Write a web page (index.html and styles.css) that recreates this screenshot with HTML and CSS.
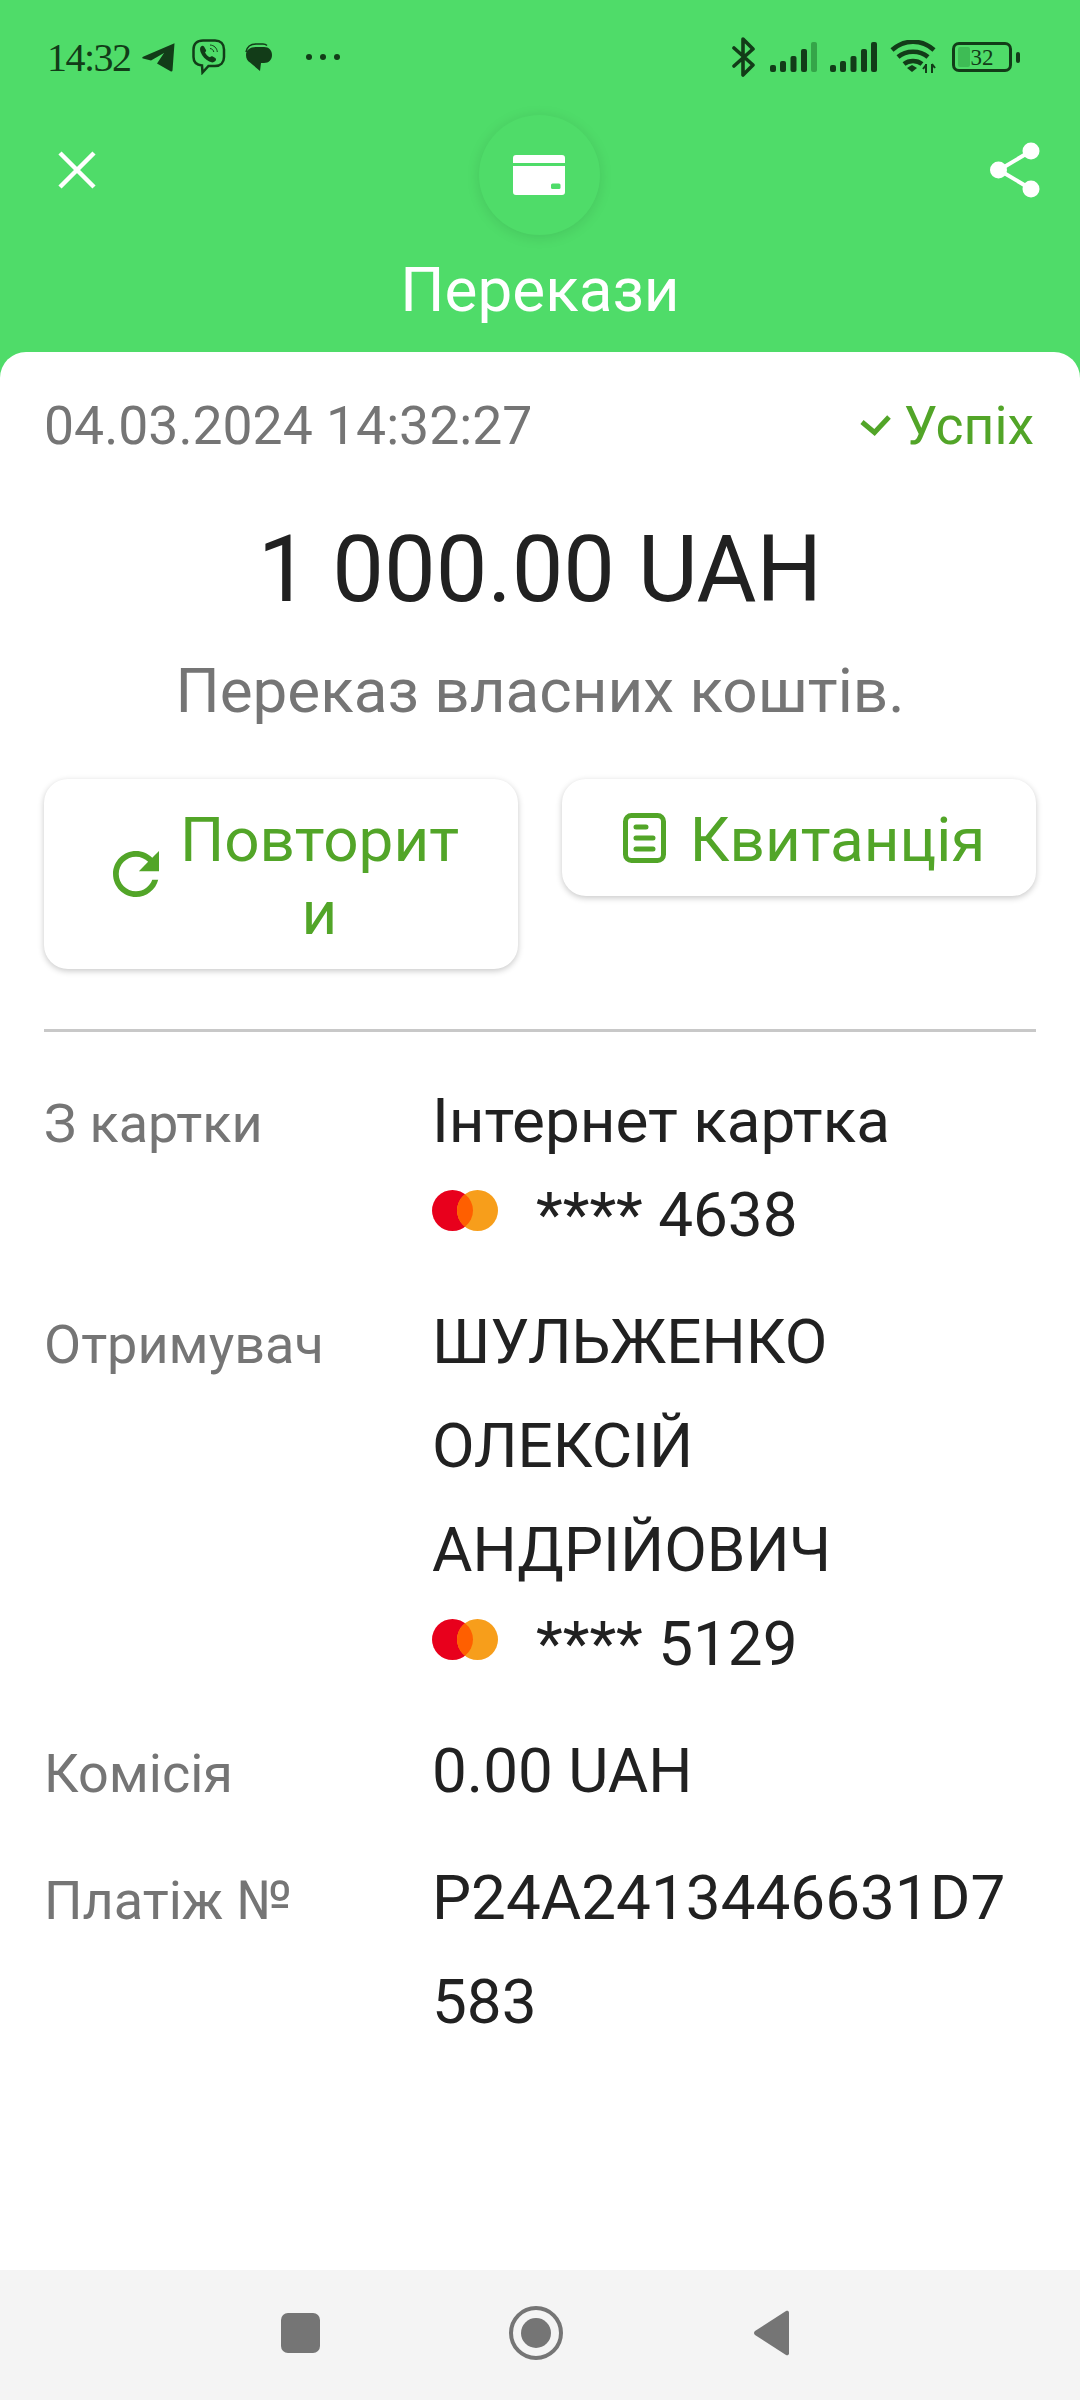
FILE: index.html
```html
<!DOCTYPE html>
<html lang="uk">
<head>
    <meta charset="UTF-8">
    <meta name="viewport" content="width=device-width, initial-scale=1.0">
    <title>Перекази</title>
    <link rel="stylesheet" href="styles.css">
</head>
<body>

<div class="screen">
    <header class="top">
        <div class="status-bar">
            <div class="status-left">
                <span class="clock">14:32</span>
                <!-- telegram -->
                <svg class="st-telegram" width="33" height="29" viewBox="0 0 33 29"><path d="M32.500.3 30.500 27.500c-.2 1-1 1.300-2 .7L15 20.500 22 10 9 17.500 1 15.500c-1-.4-1-1.200 0-1.800z" fill="#123c18"/></svg>
                <!-- viber -->
                <svg class="st-viber" width="34" height="36" viewBox="0 0 34 36"><path d="M11 1.500h12c5.500 0 9 3.500 9 9V18c0 5.500-3.500 9-9 9h-6.500l-6 6.500-.5-7C5 26 1.500 23 1.500 18v-7.500c0-5.500 3.500-9 9.500-9z" fill="none" stroke="#123c18" stroke-width="2.500"/><path d="M9 7.500c1-1 2-1 3 0l2 3.500c.3.800 0 1.500-1 2.300.8 2.200 2.700 4.200 5 5 .8-1 1.500-1.300 2.300-1l3 1.800c1 1 1 2 0 3-1.500 1.500-3.500 1.700-6 .5-4-2-7-5-8.500-9C8 11.300 7.500 9 9 7.500z" fill="#123c18"/><path d="M18 6c4 .2 7 3 7.300 7M18 9.500c2 .2 3.500 1.600 3.800 3.500" fill="none" stroke="#123c18" stroke-width="1"/></svg>
                <!-- chat bubble -->
                <svg class="st-bubble" width="28" height="29" viewBox="0 0 28 29"><path d="M1 9C2 3.500 6 1 11 1h7c2 0 3 .5 4 1.500" fill="none" stroke="#123c18" stroke-width="1.500"/><path d="M1 12C1 7 5 4 11 4h8c5 0 8 3.500 8 8s-3 8-8 8h-3l-1 8-10-8.500C2.500 18 1 15.500 1 12z" fill="#123c18"/></svg>
                <span class="st-dots"><i></i><i></i><i></i></span>
            </div>
            <div class="status-right">
                <svg class="st-bt" width="24" height="40" viewBox="0 0 24 40"><path d="M2 11 21 28 11 38V2l10 10L2 29" fill="none" stroke="#123c18" stroke-width="3.600" stroke-linejoin="round" stroke-linecap="round"/></svg>
                <svg class="st-signal" width="47" height="30" viewBox="0 0 47 30"><g fill="#123c18"><rect x="0" y="23" width="6" height="7" rx="2"/><rect x="10" y="19" width="6" height="11" rx="2"/><rect x="20.500" y="14" width="6" height="16" rx="2"/><rect x="31" y="7" width="6" height="23" rx="2"/></g><rect x="41" y="0" width="6" height="30" rx="2" fill="#35a549"/></svg>
                <svg class="st-signal" width="47" height="30" viewBox="0 0 47 30"><g fill="#123c18"><rect x="0" y="23" width="6" height="7" rx="2"/><rect x="10" y="19" width="6" height="11" rx="2"/><rect x="20.500" y="14" width="6" height="16" rx="2"/><rect x="31" y="7" width="6" height="23" rx="2"/><rect x="41" y="0" width="6" height="30" rx="2"/></g></svg>
                <svg class="st-wifi" width="46" height="34" viewBox="0 0 46 34"><path d="M2 10c12-11 30-11 42 0M8 17c8-7 22-7 30 0M14 24c5-4 13-4 18 0" fill="none" stroke="#123c18" stroke-width="4.500"/><path d="M17 28l5-3 5 3-5 4z" fill="#123c18"/><path d="M36 24v9M42 24v9M33 29l3-4M42 24l3 4" fill="none" stroke="#123c18" stroke-width="2"/></svg>
                <div class="battery">
                    <div class="battery-body"><i class="battery-level"></i><span>32</span></div>
                    <i class="battery-tip"></i>
                </div>
            </div>
        </div>

        <div class="top-row">
            <svg class="close-icon" width="38" height="38" viewBox="0 0 38 38"><path d="M2 2l34 34M36 2 2 36" stroke="#fff" stroke-width="4.500" fill="none"/></svg>
            <div class="wallet">
                <svg width="52" height="40" viewBox="0 0 52 40"><path d="M3 0h46c2 0 3 1 3 3v5H0V3c0-2 1-3 3-3zM0 11h52v26c0 2-1 3-3 3H3c-2 0-3-1-3-3z" fill="#fff"/><rect x="38" y="28.500" width="9.500" height="5.500" rx="1.500" fill="#4fdc69"/></svg>
            </div>
            <svg class="share-icon" width="50" height="56" viewBox="0 0 50 56"><path d="M41 9 9 28l32 19" fill="none" stroke="#fff" stroke-width="4"/><circle cx="41" cy="9" r="8.500" fill="#fff"/><circle cx="8.500" cy="28" r="8.500" fill="#fff"/><circle cx="41" cy="47" r="8.500" fill="#fff"/></svg>
        </div>
        <h1 class="title">Перекази</h1>
    </header>

    <main class="card">
        <div class="date-row">
            <span class="date">04.03.2024 14:32:27</span>
            <span class="status">
                <svg width="31" height="22" viewBox="0 0 31 22"><path d="M2 8l12.500 10.500L29 3" fill="none" stroke="#52a528" stroke-width="5"/></svg>
                Успіх
            </span>
        </div>

        <div class="amount">1 000.00 UAH</div>
        <div class="subtitle">Переказ власних коштів.</div>

        <div class="actions">
            <button class="action action-repeat">
                <svg width="46" height="46" viewBox="4 4 16 16"><path d="M17.650 6.350C16.200 4.900 14.210 4 12 4c-4.420 0-7.990 3.580-7.990 8s3.570 8 7.990 8c3.730 0 6.840-2.550 7.730-6h-2.080c-.82 2.330-3.040 4-5.650 4-3.310 0-6-2.690-6-6s2.690-6 6-6c1.660 0 3.140.69 4.220 1.780L13 11h7V4l-2.350 2.350z" fill="#52a528"/></svg>
                <span class="action-text">Повторити</span>
            </button>
            <button class="action action-receipt">
                <svg width="43" height="50" viewBox="0 0 43 50"><rect x="2.500" y="2.500" width="38" height="45" rx="6" fill="none" stroke="#52a528" stroke-width="5"/><path d="M13 14h10M13 25h17M13 36h17" stroke="#52a528" stroke-width="5" stroke-linecap="round"/></svg>
                <span class="action-text">Квитанція</span>
            </button>
        </div>

        <hr class="divider">

        <div class="details">
            <div class="label">З картки</div>
            <div class="value">
                Інтернет картка
                <div class="card-no">
                    <svg class="mc" width="66" height="41" viewBox="0 0 66 41"><circle cx="20.500" cy="20.500" r="20.500" fill="#e8001c"/><circle cx="45.500" cy="20.500" r="20.500" fill="#f79e1b"/><path d="M33 4.250A20.500 20.500 0 0 1 33 36.750 20.500 20.500 0 0 1 33 4.250z" fill="#ff5f00"/></svg>
                    **** 4638
                </div>
            </div>

            <div class="label">Отримувач</div>
            <div class="value">
                ШУЛЬЖЕНКО ОЛЕКСІЙ АНДРІЙОВИЧ
                <div class="card-no">
                    <svg class="mc" width="66" height="41" viewBox="0 0 66 41"><circle cx="20.500" cy="20.500" r="20.500" fill="#e8001c"/><circle cx="45.500" cy="20.500" r="20.500" fill="#f79e1b"/><path d="M33 4.250A20.500 20.500 0 0 1 33 36.750 20.500 20.500 0 0 1 33 4.250z" fill="#ff5f00"/></svg>
                    **** 5129
                </div>
            </div>

            <div class="label">Комісія</div>
            <div class="value">0.00 UAH</div>

            <div class="label">Платіж №</div>
            <div class="value value-break">P24A2413446631D7583</div>
        </div>
    </main>

    <nav class="nav-bar">
        <i class="nav-square"></i>
        <span class="nav-home"><i></i></span>
        <svg width="36" height="46" viewBox="0 0 36 46"><path d="M33 1 2 21c-1.300 1-1.300 3 0 4l31 20c1 .6 3 .3 3-1.500V2.500C36 .7 34 .4 33 1z" fill="#757575"/></svg>
    </nav>
</div>

</body>
</html>
```

FILE: styles.css
```css
* {
    box-sizing: border-box;
}

body {
    margin: 0;
    font-family: 'Roboto', sans-serif;
    background-color: #4fdc69;
    color: #212121;
}

.screen {
    width: 1080px;
    height: 2400px;
    display: flex;
    flex-direction: column;
    overflow: hidden;
}

/* Green header */
.top {
    height: 352px;
    flex-shrink: 0;
    background-color: #4fdc69;
    display: flex;
    flex-direction: column;
}

.status-bar {
    height: 115px;
    padding: 37px 60px 0 47px;
    display: flex;
    justify-content: space-between;
    align-items: flex-start;
    color: #123c18;
}

.status-left,
.status-right {
    display: flex;
    align-items: center;
    height: 40px;
}

.clock {
    font-family: 'Liberation Serif', serif;
    font-size: 40px;
    letter-spacing: -1.500px;
    width: 95px;
}

.st-viber {
    margin-left: 17px;
}

.st-bubble {
    margin-left: 19px;
}

.st-dots {
    display: flex;
    gap: 8px;
    margin-left: 33px;
}

.st-dots i {
    width: 6px;
    height: 6px;
    border-radius: 50%;
    background-color: #123c18;
}

.status-right svg {
    margin-right: 13px;
}

.status-right .st-bt {
    margin-right: 14px;
}

.status-right .st-wifi {
    margin-right: 16px;
}

.battery {
    display: flex;
    align-items: center;
    gap: 4px;
}

.battery-body {
    position: relative;
    width: 60px;
    height: 30px;
    border: 3px solid #123c18;
    border-radius: 7px;
    font-family: 'Liberation Serif', serif;
    font-size: 23px;
    line-height: 25px;
    text-align: center;
}

.battery-body span {
    position: relative;
}

.battery-level {
    position: absolute;
    left: 3px;
    top: 2px;
    bottom: 2px;
    width: 12px;
    border-radius: 2px;
    background-color: #3ebc55;
}

.battery-tip {
    width: 4px;
    height: 11px;
    border-radius: 2px;
    background-color: #123c18;
}

.top-row {
    display: flex;
    justify-content: space-between;
    align-items: flex-start;
    padding: 0 40px 0 58px;
}

.close-icon {
    margin-top: 36px;
}

.wallet {
    width: 121px;
    height: 120px;
    margin-right: 8px;
    border-radius: 50%;
    background-color: #4fdc69;
    box-shadow: 0 2px 14px rgba(0, 0, 0, 0.1);
    display: flex;
    align-items: center;
    justify-content: center;
}

.share-icon {
    margin-top: 27px;
}

.title {
    margin: 20px 0 0;
    font-size: 62px;
    line-height: 70px;
    font-weight: 400;
    color: #fff;
    text-align: center;
}

/* White sheet */
.card {
    flex: 1;
    background-color: #fff;
    border-radius: 26px 26px 0 0;
    padding: 0 44px;
}

.date-row {
    height: 130px;
    padding-top: 16px;
    display: flex;
    justify-content: space-between;
    align-items: center;
}

.date {
    font-size: 53.500px;
    color: #757575;
}

.status {
    display: flex;
    align-items: center;
    gap: 13px;
    font-size: 53.500px;
    color: #52a528;
    margin-right: 2px;
}

.amount {
    margin-top: 35px;
    font-size: 92px;
    line-height: 106px;
    text-align: center;
    color: #212121;
}

.subtitle {
    margin-top: 34px;
    font-size: 62px;
    line-height: 68px;
    text-align: center;
    color: #757575;
}

.actions {
    margin-top: 54px;
    display: grid;
    grid-template-columns: 1fr 1fr;
    align-items: start;
    column-gap: 44px;
}

.action {
    padding: 24px 20px 20px;
    border: none;
    border-radius: 24px;
    background-color: #fff;
    box-shadow: 0 2px 6px rgba(0, 0, 0, 0.22);
    color: #52a528;
    font-family: inherit;
    font-size: 62px;
    line-height: 73px;
    display: flex;
    align-items: center;
    justify-content: center;
    gap: 24px;
}

.action svg {
    flex-shrink: 0;
    margin-bottom: 4px;
}

.action-repeat {
    padding: 24px 53px 20px 69px;
    gap: 15px;
}

.action-repeat .action-text {
    flex: 1;
}

.action-receipt {
    padding-right: 10px;
}

.action-text {
    min-width: 0;
    word-break: break-all;
    text-align: center;
}

.divider {
    height: 3px;
    margin: 60px 0 0;
    border: none;
    background-color: #c8c8c8;
}

.details {
    margin-top: 37px;
    display: grid;
    grid-template-columns: 388px 1fr;
    row-gap: 23px;
}

.label {
    height: 104px;
    font-size: 54px;
    line-height: 104px;
    padding-top: 3px;
    color: #757575;
}

.value {
    font-size: 62px;
    line-height: 104px;
    color: #212121;
}

.value-break {
    word-break: break-all;
}

.card-no {
    height: 94px;
    line-height: 84px;
    display: flex;
    align-items: flex-start;
}

.mc {
    width: 66px;
    height: 41px;
    margin: 17px 38px 0 0;
    flex-shrink: 0;
}

/* Bottom navigation */
.nav-bar {
    height: 130px;
    flex-shrink: 0;
    background-color: #f4f4f4;
    display: flex;
    align-items: center;
    padding-left: 281px;
    padding-bottom: 4px;
}

.nav-square {
    width: 39px;
    height: 40px;
    border-radius: 7px;
    background-color: #757575;
}

.nav-home {
    width: 54px;
    height: 54px;
    margin-left: 189px;
    border: 4px solid #757575;
    border-radius: 50%;
    display: flex;
    align-items: center;
    justify-content: center;
}

.nav-home i {
    width: 30px;
    height: 30px;
    border-radius: 50%;
    background-color: #757575;
}

.nav-bar svg {
    margin-left: 190px;
}
```
